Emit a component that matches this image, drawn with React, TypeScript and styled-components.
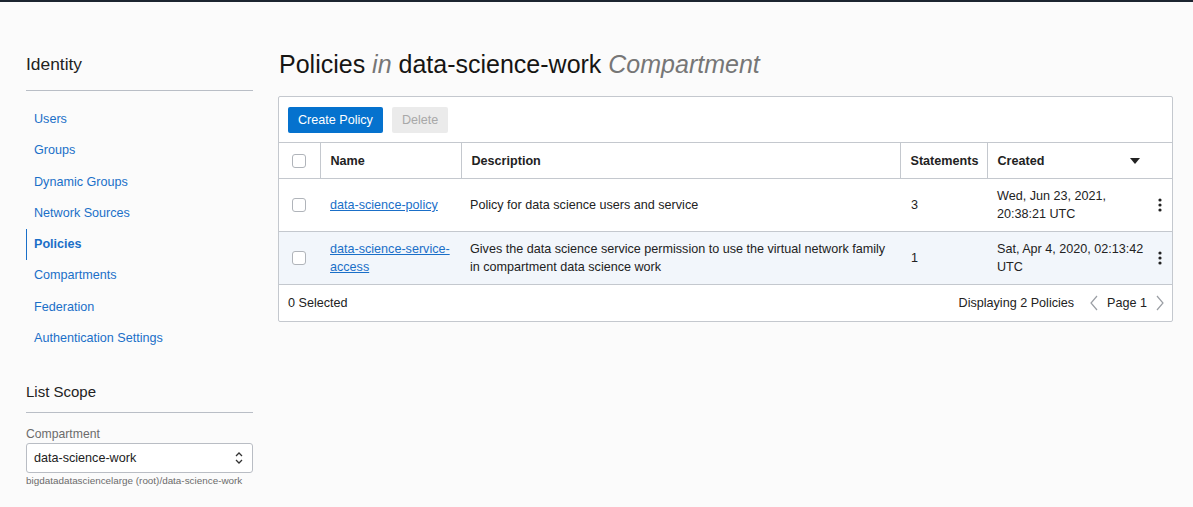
import styled, { createGlobalStyle } from 'styled-components'

const GlobalStyle = createGlobalStyle`
  html, body {
    margin: 0;
    padding: 0;
    background: #fbfbfb;
    font-family: "Liberation Sans", Arial, sans-serif;
    font-size: 12.6px;
    color: #222;
  }
`

const navItems = [
  'Users',
  'Groups',
  'Dynamic Groups',
  'Network Sources',
  'Policies',
  'Compartments',
  'Federation',
  'Authentication Settings',
]

const policies = [
  {
    name: 'data-science-policy',
    description: 'Policy for data science users and service',
    statements: 3,
    created: 'Wed, Jun 23, 2021, 20:38:21 UTC',
  },
  {
    name: 'data-science-service-access',
    description:
      'Gives the data science service permission to use the virtual network family in compartment data science work',
    statements: 1,
    created: 'Sat, Apr 4, 2020, 02:13:42 UTC',
  },
]

const Kebab = () => (
  <svg width="4" height="14" viewBox="0 0 4 14">
    <circle cx="2" cy="2" r="1.6" fill="#222" />
    <circle cx="2" cy="7" r="1.6" fill="#222" />
    <circle cx="2" cy="12" r="1.6" fill="#222" />
  </svg>
)

const Chevron = ({ dir }: { dir: 'left' | 'right' }) => (
  <svg width="10" height="16" viewBox="0 0 10 16">
    <path
      d={dir === 'left' ? 'M8 1 L2 8 L8 15' : 'M2 1 L8 8 L2 15'}
      fill="none"
      stroke="#9a9ea4"
      strokeWidth="1.2"
    />
  </svg>
)

const App = () => {
  return (
    <>
      <GlobalStyle />
      <TopBar />
      <Page>
        <Sidebar>
          <SideHeading>Identity</SideHeading>
          <NavList>
            {navItems.map((item) => (
              <NavItem key={item} $active={item === 'Policies'}>
                {item}
              </NavItem>
            ))}
          </NavList>
          <ScopeHeading>List Scope</ScopeHeading>
          <FieldLabel>Compartment</FieldLabel>
          <SelectBox>
            <span>data-science-work</span>
            <svg width="10" height="16" viewBox="0 0 10 16">
              <path d="M2 6 L5 3 L8 6 M2 10 L5 13 L8 10" fill="none" stroke="#333" strokeWidth="1.3" />
            </svg>
          </SelectBox>
          <HelpText>bigdatadatasciencelarge (root)/data-science-work</HelpText>
        </Sidebar>

        <Main>
          <Title>
            Policies <Muted>in</Muted> data-science-work <Muted>Compartment</Muted>
          </Title>
          <Panel>
            <Toolbar>
              <Button $primary>Create Policy</Button>
              <Button disabled>Delete</Button>
            </Toolbar>
            <Table>
              <colgroup>
                <col style={{ width: 41 }} />
                <col style={{ width: 141 }} />
                <col style={{ width: 439 }} />
                <col style={{ width: 87 }} />
                <col />
              </colgroup>
              <thead>
                <tr>
                  <HeadCell>
                    <Checkbox />
                  </HeadCell>
                  <HeadCell>Name</HeadCell>
                  <HeadCell>Description</HeadCell>
                  <HeadCell>Statements</HeadCell>
                  <HeadCell>
                    <CreatedHead>
                      Created
                      <svg width="10" height="6" viewBox="0 0 10 6">
                        <path d="M0 0 L10 0 L5 6 Z" fill="#222" />
                      </svg>
                    </CreatedHead>
                  </HeadCell>
                </tr>
              </thead>
              <tbody>
                {policies.map((p, i) => (
                  <Row key={p.name} $alt={i % 2 === 1}>
                    <Cell>
                      <Checkbox />
                    </Cell>
                    <Cell>
                      <PolicyLink href="#">{p.name}</PolicyLink>
                    </Cell>
                    <Cell>{p.description}</Cell>
                    <Cell>{p.statements}</Cell>
                    <Cell>
                      <CreatedCell>
                        <DateText>{p.created}</DateText>
                        <Kebab />
                      </CreatedCell>
                    </Cell>
                  </Row>
                ))}
              </tbody>
            </Table>
            <Footer>
              <span>0 Selected</span>
              <Pager>
                <span>Displaying 2 Policies</span>
                <PageNav>
                  <Chevron dir="left" />
                  <span>Page 1</span>
                  <Chevron dir="right" />
                </PageNav>
              </Pager>
            </Footer>
          </Panel>
        </Main>
      </Page>
    </>
  )
}
export default App

const TopBar = styled.div`
  height: 2px;
  background: #1c2530;
`

const Page = styled.div`
  display: flex;
  gap: 25px;
  padding: 0 20px 0 26px;
`

const Sidebar = styled.aside`
  width: 227px;
  flex-shrink: 0;
  padding-top: 50px;
`

const SideHeading = styled.h2`
  margin: 0;
  font-size: 17.4px;
  font-weight: normal;
  line-height: 24px;
  padding-bottom: 14px;
  border-bottom: 1px solid #b9bec6;
  color: #222;
`

const NavList = styled.nav`
  display: flex;
  flex-direction: column;
  margin-top: 13px;
`

const NavItem = styled.a<{ $active?: boolean }>`
  display: block;
  height: 31.3px;
  line-height: 31.3px;
  padding-left: 7px;
  color: #1a6fc8;
  font-weight: ${(p) => (p.$active ? 'bold' : 'normal')};
  border-left: 1px solid ${(p) => (p.$active ? '#1a6fc8' : 'transparent')};
  cursor: pointer;
`

const ScopeHeading = styled.h3`
  margin: 28px 0 0;
  font-size: 15px;
  font-weight: normal;
  line-height: 20px;
  padding-bottom: 10px;
  border-bottom: 1px solid #b9bec6;
  color: #222;
`

const FieldLabel = styled.div`
  margin-top: 14px;
  font-size: 12.2px;
  line-height: 14px;
  color: #6b6b6b;
`

const SelectBox = styled.div`
  margin-top: 2px;
  height: 30px;
  box-sizing: border-box;
  border: 1px solid #b9bdc4;
  border-radius: 3px;
  background: #fff;
  display: flex;
  align-items: center;
  justify-content: space-between;
  padding: 0 8px 0 7px;
  color: #222;
`

const HelpText = styled.div`
  margin-top: 2px;
  font-size: 9.9px;
  line-height: 12px;
  color: #6b6b6b;
`

const Main = styled.main`
  flex: 1;
  padding-top: 47px;
`

const Title = styled.h1`
  margin: 0 0 17px 1px;
  font-size: 25px;
  font-weight: normal;
  line-height: 30px;
  color: #161513;
`

const Muted = styled.em`
  color: #767676;
`

const Panel = styled.section`
  background: #fff;
  border: 1px solid #c4c8ce;
  border-radius: 2px;
`

const Toolbar = styled.div`
  display: flex;
  gap: 9px;
  align-items: center;
  height: 45px;
  padding: 0 9px;
  border-bottom: 1px solid #c4c8ce;
`

const Button = styled.button<{ $primary?: boolean }>`
  height: 26px;
  padding: 0 10px;
  border: none;
  border-radius: 2px;
  font-family: inherit;
  font-size: 12.6px;
  background: ${(p) => (p.$primary ? '#0572ce' : '#ebebeb')};
  color: ${(p) => (p.$primary ? '#fff' : '#a8a8a8')};
  cursor: ${(p) => (p.$primary ? 'pointer' : 'default')};
`

const Table = styled.table`
  width: 100%;
  border-collapse: collapse;
  table-layout: fixed;
`

const HeadCell = styled.th`
  height: 35px;
  padding: 0 10px;
  text-align: left;
  font-weight: bold;
  color: #222;
  border-bottom: 1px solid #c4c8ce;
  border-left: 1px solid #c4c8ce;

  &:first-child {
    border-left: none;
    padding-left: 13px;
  }
`

const CreatedHead = styled.div`
  display: flex;
  align-items: center;
  justify-content: space-between;
  padding-right: 22px;
`

const Row = styled.tr<{ $alt?: boolean }>`
  height: 53px;
  background: ${(p) => (p.$alt ? '#f2f6fb' : '#fff')};
  border-bottom: 1px solid #c4c8ce;
`

const Cell = styled.td`
  padding: 0 10px;
  line-height: 18px;
  vertical-align: middle;
  color: #222;

  &:first-child {
    padding-left: 13px;
  }
  &:nth-child(3) {
    padding-left: 9px;
  }
  &:nth-child(4) {
    padding-left: 11px;
  }
`

const Checkbox = styled.span`
  display: block;
  width: 14px;
  height: 14px;
  box-sizing: border-box;
  border: 1px solid #b0b4ba;
  border-radius: 3px;
  background: #fff;
`

const PolicyLink = styled.a`
  color: #1a6fc8;
  text-decoration: underline;
`

const CreatedCell = styled.div`
  display: flex;
  align-items: center;
  justify-content: space-between;
`

const DateText = styled.div`
  width: 150px;
`

const Footer = styled.div`
  display: flex;
  align-items: center;
  justify-content: space-between;
  height: 36px;
  padding: 0 7px 0 9px;
  color: #222;
`

const Pager = styled.div`
  display: flex;
  align-items: center;
  gap: 15px;
`

const PageNav = styled.div`
  display: flex;
  align-items: center;
  gap: 8px;
`
